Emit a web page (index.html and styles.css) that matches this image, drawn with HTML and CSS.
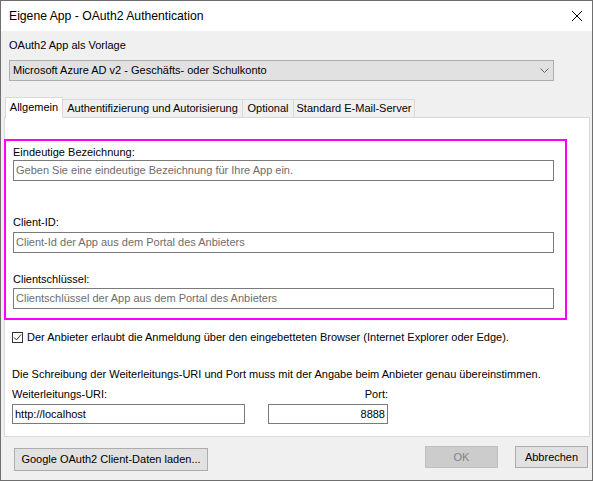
FILE: index.html
```html
<!DOCTYPE html>
<html lang="de">
<head>
<meta charset="utf-8">
<title>Eigene App - OAuth2 Authentication</title>
<link rel="stylesheet" href="styles.css">
</head>
<body>
<div class="window">
  <div class="titlebar">
    <span class="title">Eigene App - OAuth2 Authentication</span>
    <svg class="close" width="12" height="12" viewBox="0 0 12 12"><path d="M1 1 L11 11 M11 1 L1 11" stroke="#000" stroke-width="1" fill="none"/></svg>
  </div>
  <div class="body">
    <div class="top-label">OAuth2 App als Vorlage</div>
    <div class="combo">
      <span class="combo-text">Microsoft Azure AD v2 - Geschäfts- oder Schulkonto</span>
      <svg class="chevron" width="9" height="6" viewBox="0 0 9 6"><path d="M0.5 0.5 L4.5 4.5 L8.5 0.5" stroke="#606060" stroke-width="1" fill="none"/></svg>
    </div>
    <div class="tabs">
      <div class="tab active tab-1">Allgemein</div>
      <div class="tab tab-2">Authentifizierung und Autorisierung</div>
      <div class="tab tab-3">Optional</div>
      <div class="tab tab-4">Standard E-Mail-Server</div>
    </div>
    <div class="panel">
      <div class="highlight">
        <div class="field-label l1">Eindeutige Bezeichnung:</div>
        <div class="input i1 placeholder">Geben Sie eine eindeutige Bezeichnung für Ihre App ein.</div>
        <div class="field-label l2">Client-ID:</div>
        <div class="input i2 placeholder">Client-Id der App aus dem Portal des Anbieters</div>
        <div class="field-label l3">Clientschlüssel:</div>
        <div class="input i3 placeholder">Clientschlüssel der App aus dem Portal des Anbieters</div>
      </div>
      <div class="check-row">
        <span class="checkbox"><svg width="9" height="9" viewBox="0 0 9 9"><path d="M1 4.5 L3.5 7 L8 1.5" stroke="#333" stroke-width="1" fill="none"/></svg></span>
        <span>Der Anbieter erlaubt die Anmeldung über den eingebetteten Browser (Internet Explorer oder Edge).</span>
      </div>
      <div class="note">Die Schreibung der Weiterleitungs-URI und Port muss mit der Angabe beim Anbieter genau übereinstimmen.</div>
      <div class="redirect">
        <div class="col-uri">
          <div class="small-label">Weiterleitungs-URI:</div>
          <div class="input uri">http://localhost</div>
        </div>
        <div class="col-port">
          <div class="small-label port-label">Port:</div>
          <div class="input port">8888</div>
        </div>
      </div>
    </div>
    <div class="footer">
      <div class="button google">Google OAuth2 Client-Daten laden...</div>
      <div class="spacer"></div>
      <div class="button ok disabled">OK</div>
      <div class="button cancel">Abbrechen</div>
    </div>
  </div>
</div>
</body>
</html>
```

FILE: styles.css
```css
html, body {
  margin: 0;
  padding: 0;
  background: #ffffff;
}
body {
  font-family: "Liberation Sans", Arial, sans-serif;
  font-size: 11px;
  line-height: 15px;
  color: #000;
}
.window {
  width: 593px;
  height: 481px;
  box-sizing: border-box;
  border: 1px solid #6f6f6f;
  background: #f0f0f0;
  display: flex;
  flex-direction: column;
}
.titlebar {
  height: 30px;
  background: #ffffff;
  display: flex;
  align-items: center;
  padding-left: 8px;
  padding-right: 9px;
}
.title {
  flex: 1;
  font-size: 12.2px;
}
.close {
  display: block;
}
.body {
  flex: 1;
  display: flex;
  flex-direction: column;
}
.top-label {
  margin-top: 7px;
  margin-left: 8px;
  height: 15px;
}
.combo {
  margin-top: 7px;
  margin-left: 8px;
  width: 545px;
  height: 21px;
  box-sizing: border-box;
  border: 1px solid #adadad;
  background: #e1e1e1;
  display: flex;
  align-items: center;
  padding-left: 3px;
  padding-right: 4px;
}
.combo-text {
  flex: 1;
}
.chevron {
  display: block;
}
.tabs {
  margin-top: 16px;
  margin-left: 4px;
  height: 20px;
  display: flex;
  align-items: flex-end;
  position: relative;
  z-index: 1;
}
.tab {
  box-sizing: border-box;
  height: 18px;
  border: 1px solid #d9d9d9;
  border-bottom: none;
  background: #f0f0f0;
  margin-left: -1px;
  text-align: center;
  line-height: 17px;
  white-space: nowrap;
}
.tab.active {
  height: 21px;
  margin-bottom: -1px;
  margin-left: 0;
  background: #ffffff;
  line-height: 18px;
  padding-bottom: 1px;
}
.tab-1 { width: 58px; }
.tab-2 { width: 181px; }
.tab-3 { width: 52px; }
.tab-4 { width: 122px; }
.panel {
  margin-left: 3px;
  width: 586px;
  height: 320px;
  box-sizing: border-box;
  border: 1px solid #d9d9d9;
  background: #ffffff;
}
.highlight {
  margin-top: 21px;
  margin-left: -1px;
  width: 563px;
  height: 181px;
  box-sizing: border-box;
  border: 2px solid #ff00ff;
  padding: 4px 0 0 7px;
}
.field-label {
  height: 15px;
}
.l2 { margin-top: 34px; }
.l3 { margin-top: 19px; }
.input {
  box-sizing: border-box;
  border: 1px solid #7a7a7a;
  background: #ffffff;
  height: 21px;
  line-height: 19px;
  padding-left: 2px;
  white-space: nowrap;
}
.i1, .i2, .i3 { width: 541px; }
.i2 { margin-top: 2px; }
.i3 { margin-top: 1px; }
.placeholder {
  color: #6d6d6d;
}
.check-row {
  margin-top: 10px;
  margin-left: 7px;
  display: flex;
  align-items: center;
  height: 15px;
  white-space: nowrap;
}
.checkbox {
  width: 11px;
  height: 11px;
  box-sizing: border-box;
  border: 1px solid #333333;
  background: #ffffff;
  margin-right: 4px;
  display: flex;
  align-items: center;
  justify-content: center;
}
.checkbox svg {
  display: block;
}
.note {
  margin-top: 22px;
  margin-left: 7px;
  height: 15px;
  white-space: nowrap;
}
.redirect {
  margin-top: 5px;
  margin-left: 7px;
  display: grid;
  grid-template-columns: 233px 120px;
  column-gap: 23px;
}
.small-label {
  height: 15px;
}
.port-label {
  text-align: right;
}
.uri, .port {
  margin-top: 2px;
  height: 20px;
  line-height: 18px;
}
.port {
  text-align: right;
  padding-right: 2px;
}
.footer {
  display: flex;
  align-items: flex-start;
  padding: 9px 4px 0 13px;
}
.spacer {
  flex: 1;
}
.button {
  box-sizing: border-box;
  height: 22px;
  border: 1px solid #adadad;
  background: #e1e1e1;
  text-align: center;
  line-height: 20px;
  white-space: nowrap;
}
.google {
  width: 194px;
  height: 23px;
  margin-top: 2px;
  line-height: 21px;
}
.ok {
  width: 73px;
}
.cancel {
  width: 73px;
  margin-left: 17px;
}
.disabled {
  background: #cccccc;
  border-color: #bfbfbf;
  color: #838383;
}
```
